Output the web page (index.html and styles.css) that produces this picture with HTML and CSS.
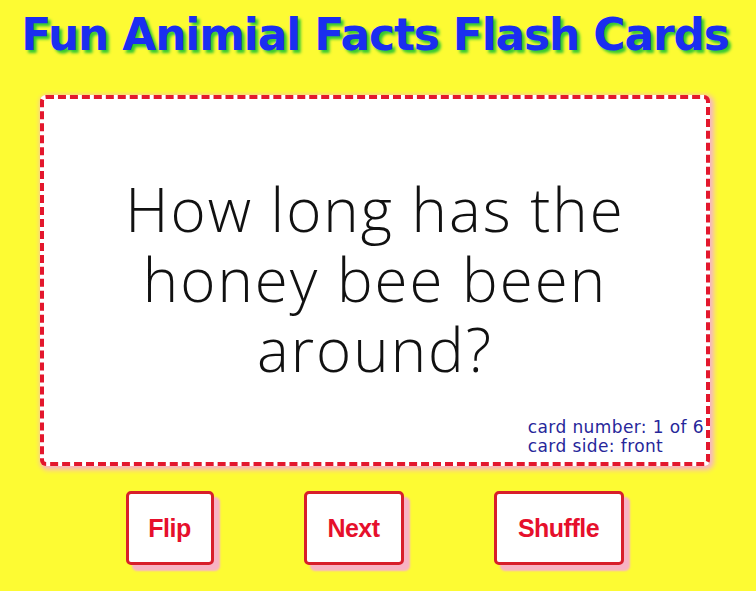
FILE: index.html
```html
<!DOCTYPE html>
<html>
<head>
<meta charset="utf-8">
<link rel="stylesheet" href="styles.css">
</head>
<body>
<h1 class="title">Fun Animial Facts Flash Cards</h1>
<div class="card">
  <p class="question">How long has the honey bee been around?</p>
  <div class="info">
    <div>card number: 1 of 6</div>
    <div>card side: front</div>
  </div>
</div>
<div class="buttons">
  <button class="btn btn-flip">Flip</button>
  <button class="btn btn-next">Next</button>
  <button class="btn btn-shuffle">Shuffle</button>
</div>
</body>
</html>
```
FILE: styles.css
```css
html, body {
  margin: 0;
  padding: 0;
}
body {
  background: #fdfb33;
  width: 756px;
  height: 591px;
  overflow: hidden;
  font-family: "DejaVu Sans", sans-serif;
}
.title {
  margin: 0;
  padding-top: 9px;
  padding-right: 6px;
  height: 83px;
  box-sizing: border-box;
  text-align: center;
  font-family: "DejaVu Sans", sans-serif;
  font-weight: bold;
  font-size: 44px;
  line-height: 52px;
  color: #1a2ef0;
  text-shadow: 3px 3px 3px #32c832;
  letter-spacing: -1.2px;
  white-space: nowrap;
}
.card {
  position: relative;
  box-sizing: border-box;
  width: 670px;
  height: 371px;
  margin: 12px 0 0 40px;
  background: #fff;
  border: 4px dashed #e3172d;
  border-radius: 6px;
  box-shadow: 2px 2px 5px 2px #f6b6c2;
  display: flex;
  align-items: center;
  justify-content: center;
}
.question {
  margin: 0 0 4px 0;
  width: 580px;
  text-align: center;
  font-family: "Open Sans", sans-serif;
  font-weight: 300;
  font-size: 60px;
  line-height: 70px;
  letter-spacing: 2px;
  color: #111;
}
.info {
  position: absolute;
  right: 2px;
  bottom: 6px;
  font-family: "DejaVu Sans", sans-serif;
  font-size: 17px;
  line-height: 19px;
  letter-spacing: 0.4px;
  color: #27279a;
}
.buttons {
  display: flex;
  justify-content: center;
  gap: 90px;
  margin-top: 25px;
  padding-right: 7px;
}
.btn {
  box-sizing: border-box;
  height: 74px;
  padding: 0;
  background: #fff;
  border: 3px solid #d81f2a;
  border-radius: 5px;
  box-shadow: 6px 6px 2px #f7b4c4;
  font-family: "Liberation Sans", Arial, sans-serif;
  font-weight: bold;
  font-size: 25px;
  letter-spacing: -0.5px;
  color: #e6102c;
}
.btn-flip { width: 88px; }
.btn-next { width: 100px; }
.btn-shuffle { width: 130px; }
```
